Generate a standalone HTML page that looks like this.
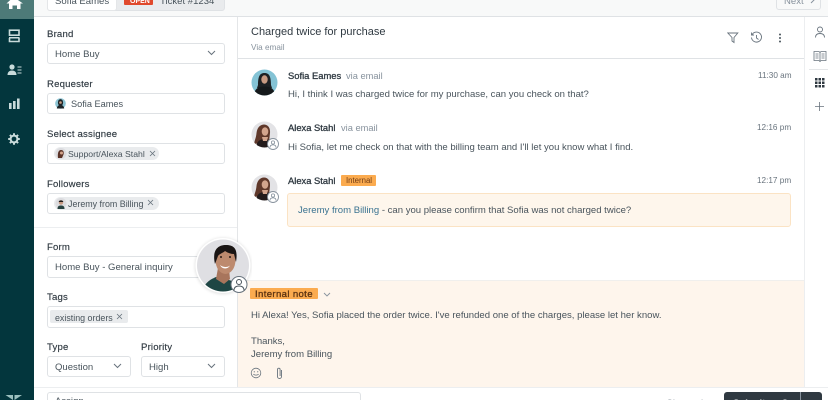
<!DOCTYPE html>
<html><head><meta charset="utf-8">
<style>
html,body{margin:0;padding:0;background:#fff}
#p{position:relative;width:828px;height:400px;overflow:hidden;background:#fff;font-family:"Liberation Sans",sans-serif;color:#2f3941;filter:blur(.3px)}
#p div,#p span.a,#p svg{position:absolute}
.t{position:absolute;white-space:nowrap;font-size:9.55px;line-height:12px;letter-spacing:0;color:#49545c}
.l{color:#2f3941;font-size:9.6px;letter-spacing:.17px;-webkit-text-stroke:.15px #2f3941}
.b{color:#2f3941;font-size:9.4px;letter-spacing:0;-webkit-text-stroke:.3px #2f3941}
.g{color:#87929d}
.in{background:#fff;border:1px solid #dfe2e5;border-radius:3px;box-sizing:border-box}
.pill{background:#e9ebed;border-radius:9px}
</style></head><body>
<div id="p">
<!-- top bar -->
<div style="left:34px;top:0;width:794px;height:16px;background:#f8f9f9;border-bottom:1px solid #dfe2e5"></div>
<div style="left:47px;top:-6px;width:176px;height:15px;background:#e9ebed;border:1px solid #dfe2e5;border-radius:3px"></div>
<div style="left:47px;top:-6px;width:68px;height:15px;background:#fff;border:1px solid #e4e6e8;border-radius:3px"></div>
<div class="t" style="left:55px;top:-4px;">Sofia Eames</div>
<div style="left:124px;top:-4px;width:29px;height:9px;background:#e0492c;border-radius:1px"></div>
<div class="t" style="left:130px;top:-4px;font-size:7px;font-weight:bold;color:#fff">OPEN</div>
<div class="t" style="left:160px;top:-4px">Ticket #1234</div>
<div style="left:776px;top:-6px;width:45px;height:16px;background:#f8f9f9;border:1px solid #dfe2e5;border-radius:3px;box-sizing:border-box"></div>
<div class="t g" style="left:784px;top:-4px">Next</div>
<svg style="left:810px;top:-3px" width="6" height="8"><path d="M1 0l3 3-3 3" fill="none" stroke="#87929d"/></svg>

<!-- sidebar -->
<div style="left:0;top:0;width:34px;height:400px;background:#03363d"></div>
<div style="left:0;top:0;width:34px;height:19px;background:#4d7a78"></div>
<svg style="left:6px;top:0" width="22" height="12" viewBox="0 0 22 12"><path d="M8 -3L1 3.500H3.500V9H7V5.500H11.500V9H15V3.500H17.500Z" fill="#fff" transform="translate(-.5 0)"/></svg>
<svg style="left:8px;top:29px" width="13" height="15" viewBox="0 0 13 15"><rect x="1.500" y="1.200" width="9.500" height="5" fill="none" stroke="#c9dbdb" stroke-width="1.600"/><rect x="1" y="8" width="10.500" height="1.500" fill="#c9dbdb"/><path d="M1.500 9v3.500h9.500V9" fill="none" stroke="#c9dbdb" stroke-width="1.600"/></svg>
<svg style="left:7px;top:64px" width="15" height="13" viewBox="0 0 15 13"><circle cx="5" cy="3" r="2.600" fill="#c9dbdb"/><path d="M.5 11c0-3 2-4.500 4.500-4.500S9.500 8 9.500 11z" fill="#c9dbdb"/><path d="M10.500 3h4M10.500 6h4M10.500 9h4" stroke="#c9dbdb" stroke-width="1.100"/></svg>
<svg style="left:8px;top:98px" width="13" height="13" viewBox="0 0 13 13"><path d="M1 5h2.600v6H1zM5 3h2.600v8H5zM9 .5h2.600V11H9z" fill="#c9dbdb"/></svg>
<svg style="left:8px;top:133px" width="13" height="13" viewBox="0 0 13 13"><circle cx="6" cy="6" r="3.400" fill="none" stroke="#c9dbdb" stroke-width="2"/><path d="M6 .2v2.400M6 9.400v2.400M.2 6h2.400M9.400 6h2.400M1.900 1.900l1.700 1.700M8.400 8.400l1.700 1.700M1.900 10.100l1.700-1.700M8.400 3.600l1.700-1.700" stroke="#c9dbdb" stroke-width="2"/></svg>
<svg style="left:5px;top:394px" width="18" height="6" viewBox="0 0 18 6"><path d="M.5 1h7.500v5zM17 1H9.500v5z" fill="#9cc0bf"/></svg>

<!-- left panel lines -->
<div style="left:237px;top:17px;width:1px;height:370px;background:#e4e6e8"></div>
<div style="left:34px;top:227px;width:203px;height:1px;background:#eceef0"></div>
<div style="left:34px;top:387px;width:794px;height:1px;background:#eceef0"></div>

<div class="t l" style="left:47px;top:29px">Brand</div>
<div class="in" style="left:47px;top:43px;width:178px;height:21px"></div>
<div class="t" style="left:55px;top:49px">Home Buy</div>
<svg style="left:207px;top:50px" width="9" height="6"><path d="M1 1l3.500 3.500L8 1" fill="none" stroke="#68737d"/></svg>

<div class="t l" style="left:47px;top:79px">Requester</div>
<div class="in" style="left:47px;top:93px;width:178px;height:21px"></div>
<svg style="left:55px;top:98px" width="11" height="11" viewBox="0 0 11 11"><circle cx="5.500" cy="5.500" r="5.300" fill="#8cc4d4"/><ellipse cx="5.500" cy="4.500" rx="2.600" ry="3.400" fill="#1d2326"/><path d="M1.800 10.500c.5-3 2-3.500 3.700-3.500s3.200.5 3.700 3.500z" fill="#1d2326"/><circle cx="5.500" cy="4.500" r="1.300" fill="#c89b83"/></svg>
<div class="t" style="left:71px;top:98px;font-size:9.2px">Sofia Eames</div>

<div class="t l" style="left:47px;top:129px">Select assignee</div>
<div class="in" style="left:47px;top:143px;width:178px;height:21px"></div>
<div class="pill" style="left:54px;top:147px;width:105px;height:13px"></div>
<svg style="left:55px;top:147px" width="12" height="13" viewBox="0 0 12 13"><circle cx="6" cy="6.500" r="5.500" fill="#dcdcdf"/><path d="M3 11c-.5-4 0-8 3-8s3 3 2.500 4.500L7 11z" fill="#5a3227"/><circle cx="6.500" cy="6" r="1.500" fill="#d4a48c"/></svg>
<div class="t" style="left:68px;top:148px;font-size:8.7px">Support/Alexa Stahl</div>
<svg style="left:149px;top:150px" width="7" height="7"><path d="M1 1l5 5M6 1l-5 5" stroke="#68737d" stroke-width=".8"/></svg>

<div class="t l" style="left:47px;top:179px">Followers</div>
<div class="in" style="left:47px;top:193px;width:178px;height:21px"></div>
<div class="pill" style="left:54px;top:197px;width:105px;height:13px"></div>
<svg style="left:55px;top:197px" width="12" height="13" viewBox="0 0 12 13"><circle cx="6" cy="6.500" r="5.500" fill="#dcdcdf"/><path d="M2.500 12c0-3 1.500-3.500 3.500-3.500s3.500.5 3.500 3.500z" fill="#26413f"/><circle cx="6" cy="5.500" r="2.200" fill="#c79a82"/><path d="M3.700 5c0-2.200 4.600-2.200 4.600 0z" fill="#1f1a18"/></svg>
<div class="t" style="left:68px;top:198px;font-size:8.9px">Jeremy from Billing</div>
<svg style="left:147px;top:199px" width="7" height="7"><path d="M1 1l5 5M6 1l-5 5" stroke="#68737d" stroke-width=".8"/></svg>

<div class="t l" style="left:47px;top:242px">Form</div>
<div class="in" style="left:47px;top:256px;width:178px;height:22px"></div>
<div class="t" style="left:55px;top:262px">Home Buy - General inquiry</div>

<div class="t l" style="left:47px;top:292px">Tags</div>
<div class="in" style="left:47px;top:306px;width:178px;height:22px"></div>
<div style="left:50px;top:310px;width:78px;height:13px;background:#e9ebed;border-radius:2px"></div>
<div class="t" style="left:55px;top:312px;font-size:8.9px">existing orders</div>
<svg style="left:116px;top:313px" width="7" height="7"><path d="M1 1l5 5M6 1l-5 5" stroke="#68737d" stroke-width=".8"/></svg>

<div class="t l" style="left:47px;top:342px">Type</div>
<div class="in" style="left:47px;top:356px;width:84px;height:21px"></div>
<div class="t" style="left:55px;top:362px">Question</div>
<svg style="left:113px;top:363px" width="9" height="6"><path d="M1 1l3.500 3.500L8 1" fill="none" stroke="#68737d"/></svg>
<div class="t l" style="left:141px;top:342px">Priority</div>
<div class="in" style="left:141px;top:356px;width:84px;height:21px"></div>
<div class="t" style="left:149px;top:362px">High</div>
<svg style="left:207px;top:363px" width="9" height="6"><path d="M1 1l3.500 3.500L8 1" fill="none" stroke="#68737d"/></svg>

<!-- header -->
<div class="t" style="left:251px;top:26px;font-size:11px;line-height:13px;letter-spacing:0;color:#2f3941">Charged twice for purchase</div>
<div class="t g" style="left:251px;top:42px;font-size:8.2px;line-height:11px">Via email</div>
<div style="left:238px;top:58px;width:566px;height:1px;background:#dfe2e5"></div>
<svg style="left:727px;top:32px" width="12" height="12" viewBox="0 0 12 12"><path d="M.8 1h10L7 5.500V10.500L5 9V5.500z" fill="none" stroke="#68737d" stroke-width=".9"/></svg>
<svg style="left:750px;top:31px" width="13" height="13" viewBox="0 0 13 13"><path d="M2.200 3.500A5 5 0 1 1 1.500 6.500M1.500 1.500v2.500h2.500M6.500 4v3l2 1.500" fill="none" stroke="#68737d" stroke-width=".9"/></svg>
<svg style="left:778px;top:33px" width="4" height="11"><circle cx="2" cy="1.500" r="1" fill="#49545c"/><circle cx="2" cy="5" r="1" fill="#49545c"/><circle cx="2" cy="8.500" r="1" fill="#49545c"/></svg>

<!-- right rail -->
<div style="left:804px;top:17px;width:1px;height:370px;background:#eceef0"></div>
<svg style="left:814px;top:26px" width="12" height="13" viewBox="0 0 12 13"><circle cx="6" cy="3.500" r="2.500" fill="none" stroke="#68737d" stroke-width=".9"/><path d="M1.500 11.500c0-3 2-4 4.500-4s4.500 1 4.500 4" fill="none" stroke="#68737d" stroke-width=".9"/></svg>
<svg style="left:813px;top:50px" width="14" height="13" viewBox="0 0 14 13"><path d="M1 1.500h5l1 1 1-1h5v9H8l-1 1-1-1H1zM7 2.500v8M2.500 4h3M2.500 6h3M2.500 8h3M8.500 4h3M8.500 6h3M8.500 8h3" fill="none" stroke="#68737d" stroke-width=".8"/></svg>
<div style="left:809px;top:69px;width:19px;height:1px;background:#e4e6e8"></div>
<svg style="left:815px;top:78px" width="10" height="10"><path d="M0 0h2.500v2.500H0zM3.500 0H6v2.500H3.500zM7 0h2.500v2.500H7zM0 3.500h2.500V6H0zM3.500 3.500H6V6H3.500zM7 3.500h2.500V6H7zM0 7h2.500v2.500H0zM3.500 7H6v2.500H3.500zM7 7h2.500v2.500H7z" fill="#2f3941"/></svg>
<svg style="left:814px;top:101px" width="11" height="11"><path d="M5.500 1v9M1 5.500h9" stroke="#68737d" stroke-width=".8"/></svg>

<!-- messages -->
<svg style="left:251px;top:69px" width="27" height="27" viewBox="0 0 27 27"><defs><clipPath id="c1"><circle cx="13.500" cy="13.500" r="13"/></clipPath></defs><circle cx="13.500" cy="13.500" r="13" fill="#84c3d5"/><g clip-path="url(#c1)"><path d="M7 16c0-9 2-12 6.500-12S20 7 20 16l1 3H6z" fill="#1d2124"/><ellipse cx="13.500" cy="10.500" rx="3.200" ry="4.200" fill="#c89a82"/><path d="M3 27c0-7 4-9.500 10.500-9.500S24 20 24 27z" fill="#15191b"/></g></svg>
<div class="t b" style="left:288px;top:70px">Sofia Eames</div>
<div class="t g" style="left:346px;top:70px;font-size:9.3px">via email</div>
<div class="t g" style="left:758px;top:70px;font-size:8.2px;color:#68737d">11:30 am</div>
<div class="t" style="left:288px;top:89px">Hi, I think I was charged twice for my purchase, can you check on that?</div>

<svg style="left:251px;top:121px" width="29" height="30" viewBox="0 0 29 30"><defs><clipPath id="c2"><circle cx="13.500" cy="13.500" r="13"/></clipPath></defs><circle cx="13.500" cy="13.500" r="13" fill="#e3e3e6"/><g clip-path="url(#c2)"><path d="M3 23c1-5 2-6 2.500-11S9 3.500 13 3.500 19.500 7 19 12l-1 9z" fill="#5f382a"/><ellipse cx="14" cy="10.500" rx="3.300" ry="4.300" fill="#d3a58d"/><path d="M5 27c.5-7 4-9 9-9s7 3 7.500 9z" fill="#241c1c"/><path d="M11 16h6l-1 4h-4z" fill="#d3a58d"/></g><circle cx="22" cy="23" r="5.500" fill="#fff" stroke="#87929d" stroke-width=".9"/><circle cx="22" cy="21.500" r="1.600" fill="none" stroke="#87929d" stroke-width=".8"/><path d="M19 26.500c0-2 1.300-2.700 3-2.700s3 .7 3 2.700" fill="none" stroke="#87929d" stroke-width=".8"/></svg>
<div class="t b" style="left:288px;top:122px">Alexa Stahl</div>
<div class="t g" style="left:341px;top:122px;font-size:9.3px">via email</div>
<div class="t g" style="left:757px;top:122px;font-size:8.2px;color:#68737d">12:16 pm</div>
<div class="t" style="left:288px;top:142px">Hi Sofia, let me check on that with the billing team and I'll let you know what I find.</div>

<svg style="left:251px;top:174px" width="29" height="30" viewBox="0 0 29 30"><defs><clipPath id="c3"><circle cx="13.500" cy="13.500" r="13"/></clipPath></defs><circle cx="13.500" cy="13.500" r="13" fill="#e3e3e6"/><g clip-path="url(#c3)"><path d="M3 23c1-5 2-6 2.500-11S9 3.500 13 3.500 19.500 7 19 12l-1 9z" fill="#5f382a"/><ellipse cx="14" cy="10.500" rx="3.300" ry="4.300" fill="#d3a58d"/><path d="M5 27c.5-7 4-9 9-9s7 3 7.500 9z" fill="#241c1c"/><path d="M11 16h6l-1 4h-4z" fill="#d3a58d"/></g><circle cx="22" cy="23" r="5.500" fill="#fff" stroke="#87929d" stroke-width=".9"/><circle cx="22" cy="21.500" r="1.600" fill="none" stroke="#87929d" stroke-width=".8"/><path d="M19 26.500c0-2 1.300-2.700 3-2.700s3 .7 3 2.700" fill="none" stroke="#87929d" stroke-width=".8"/></svg>
<div class="t b" style="left:288px;top:175px">Alexa Stahl</div>
<div style="left:341px;top:175px;width:35px;height:11px;background:#fbab4f;border-radius:1px"></div>
<div class="t" style="left:346px;top:175px;font-size:7.8px;color:#703b15">Internal</div>
<div class="t g" style="left:757px;top:175px;font-size:8.2px;color:#68737d">12:17 pm</div>
<div style="left:287px;top:193px;width:504px;height:34px;box-sizing:border-box;background:#fef6ec;border:1px solid #fbe3c4;border-radius:3px"></div>
<div class="t" style="left:298px;top:205px"><span style="color:#3a7391">Jeremy from Billing</span> - can you please confirm that Sofia was not charged twice?</div>

<!-- note -->
<div style="left:238px;top:280px;width:566px;height:107px;background:#fef5ec;border-top:1px solid #f0efed;box-sizing:border-box"></div>
<div style="left:250px;top:288px;width:68px;height:11px;background:#fbab4f;border-radius:1px"></div>
<div class="t" style="left:255px;top:289px;font-size:9.6px;letter-spacing:.35px;color:#5c3312;-webkit-text-stroke:.3px #5c3312">Internal note</div>
<svg style="left:323px;top:292px" width="8" height="6"><path d="M1 1l3 3 3-3" fill="none" stroke="#87929d" stroke-width=".9"/></svg>
<div class="t" style="left:251px;top:310px">Hi Alexa! Yes, Sofia placed the order twice. I've refunded one of the charges, please let her know.</div>
<div class="t" style="left:251px;top:336px">Thanks,</div>
<div class="t" style="left:251px;top:349px">Jeremy from Billing</div>
<svg style="left:250px;top:367px" width="12" height="12" viewBox="0 0 12 12"><circle cx="6" cy="6" r="4.800" fill="none" stroke="#68737d" stroke-width=".8"/><circle cx="4.300" cy="4.800" r=".6" fill="#68737d"/><circle cx="7.700" cy="4.800" r=".6" fill="#68737d"/><path d="M3.500 7c.6 1.500 4.400 1.500 5 0" fill="none" stroke="#68737d" stroke-width=".8"/></svg>
<svg style="left:275px;top:367px" width="9" height="13" viewBox="0 0 9 13"><path d="M6.500 3v6.500a2 2 0 0 1-4 0V2.500a1.300 1.300 0 0 1 2.600 0V9" fill="none" stroke="#68737d" stroke-width=".9"/></svg>

<!-- floating avatar -->
<svg style="left:190px;top:234px" width="62" height="64" viewBox="0 0 62 64"><defs><clipPath id="c4"><circle cx="33" cy="31.500" r="26"/></clipPath><filter id="s" x="-20%" y="-20%" width="140%" height="140%"><feGaussianBlur stdDeviation="1.500"/></filter></defs><circle cx="33" cy="32" r="28" fill="#000" opacity=".12" filter="url(#s)"/><circle cx="33" cy="31.500" r="27.500" fill="#fff"/><circle cx="33" cy="31.500" r="26" fill="#dfdfe3"/><g clip-path="url(#c4)"><path d="M12 60c1-10 7-14 14-17l10 2 12 4 4 11z" fill="#1e4644"/><path d="M28 34l11 1 1 10-6 5-8-5z" fill="#a8755c"/><ellipse cx="35.500" cy="26" rx="10" ry="14" fill="#bd8a6e"/><path d="M25 30c-3-13 2-19 11-19s12 5 10 17l-2-8c-3 0-6-1-9-3-2 2-6 3-7 5z" fill="#1a1514"/><path d="M30 31c3 2.500 8 2.500 10 .5-2 4-8 4-10-.5z" fill="#fff"/><circle cx="31" cy="23" r="1" fill="#2a1c17"/><circle cx="40" cy="23" r="1" fill="#2a1c17"/></g><circle cx="49" cy="50.500" r="8" fill="#fff" stroke="#68737d" stroke-width="1"/><circle cx="49" cy="48" r="2.500" fill="none" stroke="#49545c" stroke-width="1"/><path d="M44 56.500c0-3 2-4.500 5-4.500s5 1.500 5 4.500" fill="none" stroke="#49545c" stroke-width="1"/></svg>

<!-- bottom -->
<div class="in" style="left:47px;top:392px;width:314px;height:20px"></div>
<div class="t" style="left:55px;top:396px">Assign</div>
<div class="t g" style="left:666px;top:398px">Close tab</div>
<div style="left:724px;top:392px;width:98px;height:20px;background:#2f3941;border-radius:3px"></div>
<div style="left:800px;top:392px;width:1px;height:8px;background:#87929d"></div>
<div class="t" style="left:733px;top:398px;color:#fff;font-weight:bold">Submit as Open</div>
</div>
</body></html>
